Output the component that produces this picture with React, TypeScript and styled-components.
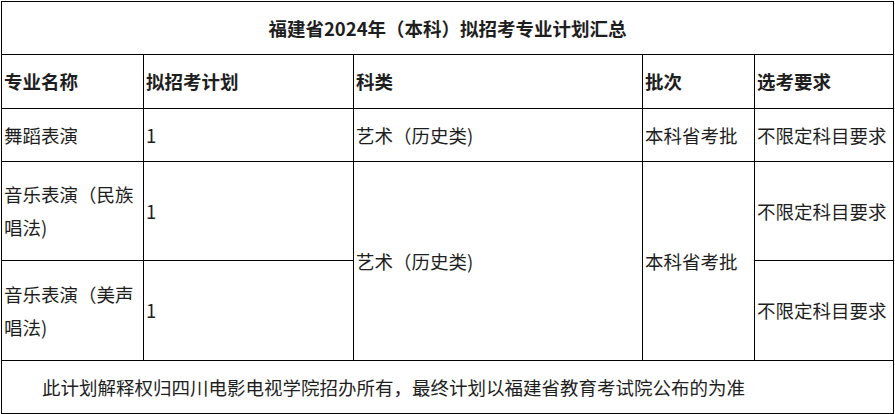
import React from 'react'
import styled, { createGlobalStyle } from 'styled-components'

const GlobalStyle = createGlobalStyle`
  html, body {
    margin: 0;
    padding: 0;
    background: #fff;
  }
  body {
    font-family: "Microsoft YaHei", "Noto Sans CJK SC", "Noto Sans", sans-serif;
    color: #1e1e1e;
  }
`

interface irow {
    name: string,
    plan: string,
    subject?: string,
    batch?: string,
    require: string,
    height: number
}

const rows: irow[] = [
    { name: '舞蹈表演', plan: '1', subject: '艺术（历史类)', batch: '本科省考批', require: '不限定科目要求', height: 53 },
    { name: '音乐表演（民族唱法)', plan: '1', subject: '艺术（历史类)', batch: '本科省考批', require: '不限定科目要求', height: 99 },
    { name: '音乐表演（美声唱法)', plan: '1', require: '不限定科目要求', height: 100 },
]

const headers = ['专业名称', '拟招考计划', '科类', '批次', '选考要求']
const widths = [142, 210, 289, 112, 139]

const App = () => {
    return (
        <Container>
            <GlobalStyle />
            <Table>
                <colgroup>
                    {widths.map((w, i) => <col key={i} style={{ width: w }} />)}
                </colgroup>
                <tbody>
                    <Row $h={53}>
                        <TitleCell colSpan={5}>福建省2024年（本科）拟招考专业计划汇总</TitleCell>
                    </Row>
                    <Row $h={54}>
                        {headers.map(h => <HeadCell key={h}>{h}</HeadCell>)}
                    </Row>
                    {rows.map((r, i) => (
                        <Row $h={r.height} key={i}>
                            <Cell>{r.name}</Cell>
                            <Cell>{r.plan}</Cell>
                            {i === 0 && <Cell>{r.subject}</Cell>}
                            {i === 0 && <Cell>{r.batch}</Cell>}
                            {i === 1 && <Cell rowSpan={2}>{r.subject}</Cell>}
                            {i === 1 && <Cell rowSpan={2}>{r.batch}</Cell>}
                            <Cell>{r.require}</Cell>
                        </Row>
                    ))}
                    <Row $h={53}>
                        <NoteCell colSpan={5}>此计划解释权归四川电影电视学院招办所有，最终计划以福建省教育考试院公布的为准</NoteCell>
                    </Row>
                </tbody>
            </Table>
        </Container>
    )
}

export default App

const Container = styled.div`
    padding: 1px 0 0 1px;
    width: 895px;
    box-sizing: border-box;
`

const Table = styled.table`
    width: 893px;
    table-layout: fixed;
    border-collapse: collapse;
    font-size: 18.5px;
    line-height: 33px;
`

const Row = styled.tr<{ $h: number }>`
    height: ${p => p.$h}px;
`

const Cell = styled.td`
    border: 1px solid #000;
    padding: 0 2px;
    vertical-align: middle;
    text-align: left;
    word-break: break-all;
`

const HeadCell = styled(Cell)`
    font-weight: bold;
`

const TitleCell = styled(Cell)`
    font-weight: bold;
    text-align: center;
`

const NoteCell = styled(Cell)`
    padding-left: 3px;
    text-indent: 2em;
`
